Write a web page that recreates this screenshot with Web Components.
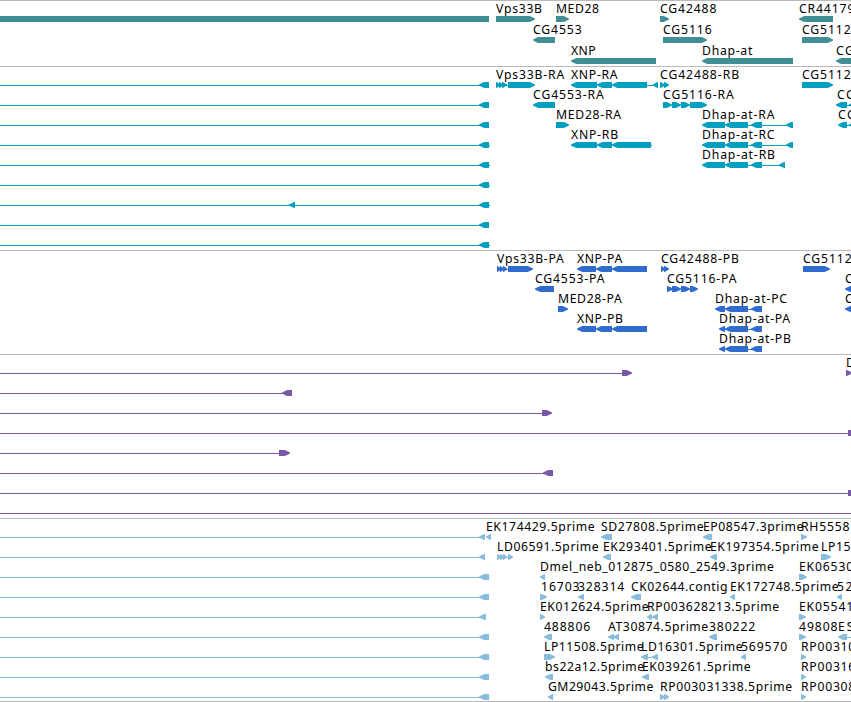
<!DOCTYPE html>
<html lang="en"><head><meta charset="utf-8"><title>Genome browser</title>
<style>html,body{margin:0;background:#fff;overflow:hidden}</style></head>
<body><genome-browser></genome-browser>
<script>
// Glyph syntax: "<kind><start>-<end>": L / R = exon pointing left / right, B = plain bar, I = intron line.
// Labels are [x, text].
const EXON_L='I0-480 L479-489', DH='L725-748 I748-752 L751-762';
const tracks=[
 {color:'#3f8f94',height:66,pitch:21,rows:[
  ['B0-489 R496-535 R556-569 R660-669 L799-833',[496,'Vps33B'],[556,'MED28'],[660,'CG42488'],[799,'CR44179']],
  ['L533-555 R663-707 R802-833',[533,'CG4553'],[663,'CG5116'],[802,'CG5112']],
  ['L571-656 L702-793 L836-860',[571,'XNP'],[702,'Dhap-at'],[836,'CG']]]},
 {color:'#009fbf',height:184,pitch:20,rows:[
  [EXON_L+' R496-500 R499-503 R502-507 I500-508 R508-535 L571-597 L597-612 L612-647 I647-654 L653-658 R660-665 R664-669 R802-833',[496,'Vps33B-RA'],[571,'XNP-RA'],[660,'CG42488-RB'],[802,'CG5112']],
  [EXON_L+' L533-555 R663-672 R672-681 R681-690 R690-707 L836-847 I847-851 L849-858',[533,'CG4553-RA'],[663,'CG5116-RA'],[837,'CG']],
  [EXON_L+' R556-569 L702-725 L725-748 I748-786 L751-762 L786-793 L838-847 I847-851 L849-858',[556,'MED28-RA'],[702,'Dhap-at-RA'],[838,'CG']],
  [EXON_L+' I489-490 L571-597 L597-612 L612-651 I651-652 L702-725 L725-748 I748-786 L751-762 L786-793',[571,'XNP-RB'],[702,'Dhap-at-RC']],
  [EXON_L+' I489-490 L702-725 L725-748 I748-780 L751-762 L779-785',[702,'Dhap-at-RB']],
  [EXON_L+' I489-490'],[EXON_L+' I489-490 L289-295'],[EXON_L],[EXON_L+' I489-490']]},
 {color:'#316bcd',height:104,pitch:20,rows:[
  ['R497-501 R500-504 R503-507 I500-508 R508-533 L577-596 L596-612 L612-647 R661-665 R664-669 R803-830',[497,'Vps33B-PA'],[577,'XNP-PA'],[661,'CG42488-PB'],[803,'CG5112']],
  ['L535-554 R667-673 R672-681 R681-690 R690-698 L845-852',[535,'CG4553-PA'],[667,'CG5116-PA'],[845,'C']],
  ['R558-568 L715-725 '+DH+' L845-852',[558,'MED28-PA'],[715,'Dhap-at-PC'],[845,'C']],
  ['L577-596 L596-612 L612-647 L719-725 '+DH,[577,'XNP-PB'],[719,'Dhap-at-PA']],
  ['L719-725 '+DH,[719,'Dhap-at-PB']]]},
 {color:'#7759a8',height:164,pitch:20,rows:[
  ['I0-622 R622-632 R846-852',[846,'D']],['I0-283 L282-292'],['I0-542 R542-552'],['I0-848 B848-851'],
  ['I0-279 R279-290'],['I0-544 L543-553'],['I0-848 B848-851'],['I0-851']]},
 {color:'#87bcdc',height:183,pitch:20,rows:[
  ['I0-480 L479-485 L486-491 L601-612 L703-712 R801-807',[486,'EK174429.5prime'],[601,'SD27808.5prime'],[703,'EP08547.3prime'],[801,'RH5558']],
  ['I0-480 L479-485 R497-501 R500-504 R503-507 I500-508 R508-513 L603-611 L710-717 R821-831',[497,'LD06591.5prime'],[603,'EK293401.5prime'],[710,'EK197354.5prime'],[821,'LP15']],
  [EXON_L+' L540-545 R799-807',[540,'Dmel_neb_012875_0580_2549.3prime'],[799,'EK06530']],
  [EXON_L+' R540-547 L578-584 L631-641 L730-735 L837-842',[541,'16703'],[578,'328314'],[631,'CK02644.contig'],[730,'EK172748.5prime'],[837,'52']],
  ['I0-480 L479-486 R540-545 L647-652 L652-658 R799-806',[540,'EK012624.5prime'],[647,'RP003628213.5prime'],[799,'EK05541']],
  [EXON_L+' L544-552 L608-614 L613-619 L709-717 R799-806 L838-847 I847-851',[544,'488806'],[608,'AT30874.5prime'],[709,'380222'],[799,'49808'],[838,'ES']],
  [EXON_L+' R544-555 L641-648 I648-653 L652-658 L741-746 R801-806',[544,'LP11508.5prime'],[641,'LD16301.5prime'],[741,'569570'],[801,'RP00310']],
  [EXON_L+' L545-553 L642-649 R801-806',[545,'bs22a12.5prime'],[642,'EK039261.5prime'],[801,'RP00316']],
  [EXON_L+' L548-553 R660-665 R664-669 R801-806',[548,'GM29043.5prime'],[660,'RP003031338.5prime'],[801,'RP00308']]]}
];

// Label widths follow DejaVu Sans metrics, with a slightly longer hyphen.
const ruler=document.createElement('canvas').getContext('2d');
ruler.font='12px "DejaVu Sans"';
const labelWidth=t=>(ruler.measureText(t).width*1.01+1.6*(t.split('-').length-1)).toFixed(1);

class FeatureRow extends HTMLElement{
  constructor(){super();this.attachShadow({mode:'open'})}
  set data([glyphs,...labels]){
    const shape=g=>{
      const k=g[0],[a,b]=g.slice(1).split('-').map(Number),w=b-a;
      if(k==='B')return `<rect x="${a}" y="12" width="${w}" height="6"/>`;
      if(k==='I')return `<rect x="${a}" y="15" width="${w}" height="1"/>`;
      const h=Math.min(w,6);
      return k==='L'
        ?`<path d="M${a} 14.6L${a+h*.5} 13L${a+h*.9} 12H${b}V18H${a+h*.9}L${a+h*.5} 17L${a} 15.6Z"/>`
        :`<path d="M${b} 14.6L${b-h*.5} 13L${b-h*.9} 12H${a}V18H${b-h*.9}L${b-h*.5} 17L${b} 15.6Z"/>`;
    };
    this.shadowRoot.innerHTML=`<style>
      :host{display:block;flex:none;height:var(--pitch)}
      svg{display:block;width:851px;height:20px;overflow:visible;fill:var(--track-color)}
      rect{shape-rendering:crispEdges}
      text{font:12.2px "Noto Sans","DejaVu Sans",sans-serif;fill:#000;white-space:pre}
    </style><svg viewBox="0 0 851 20">${glyphs.split(' ').map(shape).join('')}${labels.map(([x,t])=>`<text x="${x}" y="9" textLength="${labelWidth(t)}">${t}</text>`).join('')}</svg>`;
  }
}
customElements.define('feature-row',FeatureRow);

class GenomeTrack extends HTMLElement{
  constructor(){super();this.attachShadow({mode:'open'}).innerHTML=`<style>
    :host{display:flex;flex-direction:column;flex:none;box-sizing:border-box;border-top:1px solid #b9b9b9;padding-top:3px;height:var(--height)}
    </style><slot></slot>`}
  set data(t){
    this.style.setProperty('--height',t.height+'px');
    this.style.setProperty('--pitch',t.pitch+'px');
    this.style.setProperty('--track-color',t.color);
    for(const r of t.rows){const e=document.createElement('feature-row');e.data=r;this.append(e)}
  }
}
customElements.define('genome-track',GenomeTrack);

class GenomeBrowser extends HTMLElement{
  constructor(){
    super();
    this.attachShadow({mode:'open'}).innerHTML=`<style>
      :host{display:flex;flex-direction:column;box-sizing:border-box;width:851px;height:702px;overflow:hidden;background:#fff;border-bottom:1px solid #b9b9b9}
    </style>`;
    for(const t of tracks){const e=document.createElement('genome-track');e.data=t;this.shadowRoot.append(e)}
  }
}
customElements.define('genome-browser',GenomeBrowser);
</script></body></html>
